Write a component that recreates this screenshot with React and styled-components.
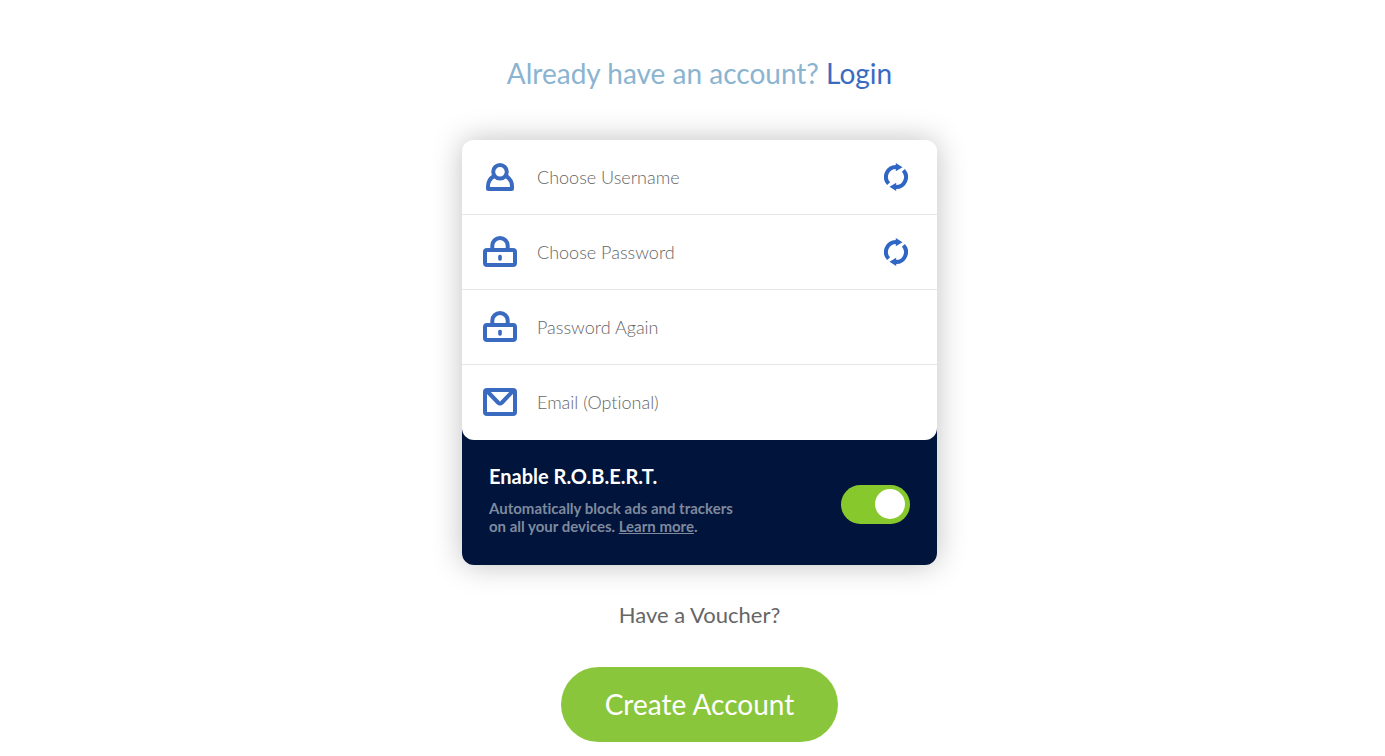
import { useState } from "react";
import styled, { createGlobalStyle } from "styled-components";

const UserIcon = () => (
  <svg width="28" height="28" viewBox="0 0 28 28" fill="none" stroke="#3b6bc0" strokeWidth="4" aria-hidden="true">
    <circle cx="14" cy="8.8" r="6.8" />
    <path d="M8 13C4 15.500 2 18.500 2 23v2.500q0 .5.5.5h23q.5 0 .5-.5V23c0-4.500-2-7.500-6-10" />
  </svg>
);

const LockIcon = () => (
  <svg width="34" height="32" viewBox="0 0 34 32" fill="none" stroke="#3b6bc0" strokeWidth="4" aria-hidden="true">
    <path d="M9.300 14V9.700a7.700 7.700 0 0 1 15.400 0V14" />
    <rect x="2" y="14" width="30" height="15" rx="2" />
    <rect x="15.2" y="18.700" width="3.600" height="6" rx="1.600" fill="#3b6bc0" stroke="none" />
  </svg>
);

const MailIcon = () => (
  <svg width="34" height="28" viewBox="0 0 34 28" fill="none" stroke="#3b6bc0" strokeWidth="4" aria-hidden="true">
    <rect x="2" y="2" width="30" height="24" rx="2" />
    <path d="M4 3l11 11.500q2 2 4 0L30 3" />
  </svg>
);

const RefreshIcon = () => (
  <svg width="24" height="28" viewBox="0 0 24 28" aria-hidden="true">
    <g fill="none" stroke="#2f66c4" strokeWidth="4">
      <path d="M4.600 20.700A10 10 0 0 1 12.500 4" />
      <path d="M19.400 7.300A10 10 0 0 1 11.500 24" />
    </g>
    <path fill="#2f66c4" d="M11.800 0l6.700 4.300-6.700 4zM12.200 28l-6.700-4.300 6.700-4z" />
  </svg>
);

const fields = [
  { id: "username", label: "Choose Username", type: "text", Icon: UserIcon, refresh: "Generate username" },
  { id: "password", label: "Choose Password", type: "password", Icon: LockIcon, refresh: "Generate password" },
  { id: "password-again", label: "Password Again", type: "password", Icon: LockIcon },
  { id: "email", label: "Email (Optional)", type: "email", Icon: MailIcon },
];

const App = () => {
  const [robert, setRobert] = useState(true);

  return (
    <>
      <GlobalStyle />
      <Page>
        <Heading>
          Already have an account? <a href="#login">Login</a>
        </Heading>

        <Form onSubmit={(e) => e.preventDefault()}>
          <Card>
            <Fields>
              {fields.map(({ id, label, type, Icon, refresh }) => (
                <Field key={id}>
                  <FieldLabel htmlFor={id}>
                    <Icon />
                  </FieldLabel>
                  <Input id={id} type={type} placeholder={label} aria-label={label} />
                  {refresh && (
                    <RefreshButton type="button" aria-label={refresh}>
                      <RefreshIcon />
                    </RefreshButton>
                  )}
                </Field>
              ))}
            </Fields>

            <Robert>
              <RobertInfo>
                <RobertTitle htmlFor="robert">Enable R.O.B.E.R.T.</RobertTitle>
                <RobertText>
                  Automatically block ads and trackers
                  <br />
                  on all your devices. <a href="#robert">Learn more</a>.
                </RobertText>
              </RobertInfo>
              <Toggle
                id="robert"
                type="checkbox"
                checked={robert}
                onChange={(e) => setRobert(e.target.checked)}
              />
            </Robert>
          </Card>

          <Voucher type="button">Have a Voucher?</Voucher>
          <Submit type="submit">Create Account</Submit>
        </Form>
      </Page>
    </>
  );
};

export default App;

const GlobalStyle = createGlobalStyle`
  * {
    box-sizing: border-box;
  }

  body {
    margin: 0;
    background-color: #fff;
    font-family: Lato, "Liberation Sans", sans-serif;
    font-variant-ligatures: none;
  }

  button,
  input {
    font-family: inherit;
    font-variant-ligatures: inherit;
  }
`;

const Page = styled.main`
  display: flex;
  flex-direction: column;
  align-items: center;
  padding: 55px 0 14px 14px;
`;

const Heading = styled.h1`
  margin: 0 0 49px;
  font-size: 28px;
  font-weight: 400;
  line-height: 36px;
  color: #8ab4d0;

  a {
    color: #3b6bc0;
    text-decoration: none;
  }
`;

const Form = styled.form`
  display: flex;
  flex-direction: column;
  align-items: center;
  width: 100%;
  max-width: 475px;
`;

const Card = styled.div`
  width: 100%;
  border-radius: 12px;
  box-shadow: 0 0 30px rgba(0, 0, 0, 0.25);
`;

const Fields = styled.div`
  position: relative;
  z-index: 1;
  border-radius: 12px;
  background-color: #fff;
`;

const Field = styled.div`
  display: flex;
  align-items: center;
  height: 75px;
  padding: 0 29px 0 18px;
  border-bottom: 1px solid #e6e6e6;

  &:last-child {
    border-color: transparent;
  }
`;

const FieldLabel = styled.label`
  display: flex;
  justify-content: center;
  width: 40px;
`;

const Input = styled.input`
  flex: 1;
  min-width: 0;
  height: 48px;
  padding: 0 17px;
  border: none;
  outline: none;
  background: none;
  font-size: 18px;
  font-weight: 300;
  color: #333;

  &::placeholder {
    color: #666;
    opacity: 1;
  }
`;

const RefreshButton = styled.button`
  display: flex;
  padding: 0;
  border: none;
  background: none;
  cursor: pointer;
`;

const Robert = styled.div`
  display: flex;
  align-items: center;
  justify-content: space-between;
  margin-top: -12px;
  padding: 35px 27px 19px;
  border-radius: 0 0 12px 12px;
  background-color: #00143c;
`;

const RobertInfo = styled.div`
  padding-bottom: 11px;
`;

const RobertTitle = styled.label`
  display: block;
  margin-bottom: 10px;
  font-size: 20px;
  font-weight: 700;
  line-height: 26px;
  color: #fff;
`;

const RobertText = styled.p`
  margin: 0;
  font-size: 15px;
  font-weight: 700;
  line-height: 18px;
  color: #7f899d;

  a {
    color: inherit;
  }
`;

const Toggle = styled.input`
  display: flex;
  align-items: center;
  width: 69px;
  height: 39px;
  margin: 0;
  padding: 0 5px 1px;
  border-radius: 20px;
  appearance: none;
  background-color: #7f899d;
  cursor: pointer;

  &::before {
    content: "";
    width: 30px;
    height: 30px;
    border-radius: 50%;
    background-color: #fff;
  }

  &:checked {
    justify-content: flex-end;
    background-color: #87c92d;
  }
`;

const Voucher = styled.button`
  margin: 35px 0 37px;
  padding: 0;
  border: none;
  background: none;
  font-size: 22px;
  line-height: 30px;
  color: #666;
  cursor: pointer;
`;

const Submit = styled.button`
  height: 75px;
  padding: 0 44px 2px;
  border: none;
  border-radius: 38px;
  background-color: #8ac63c;
  font-size: 28px;
  color: #fff;
  cursor: pointer;
`;
